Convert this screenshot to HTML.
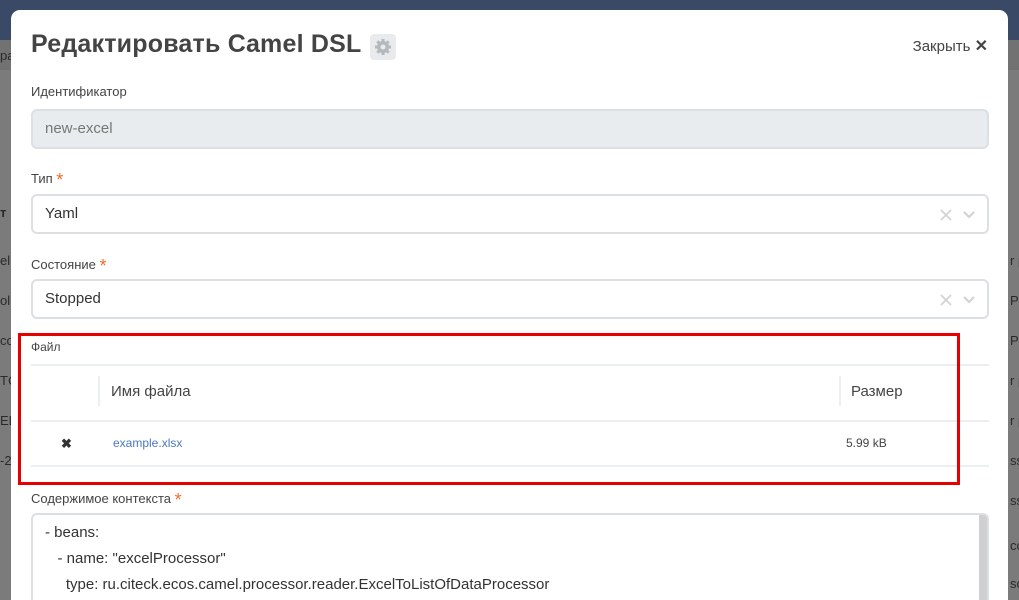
<!DOCTYPE html>
<html><head><meta charset="utf-8"><style>
*{box-sizing:border-box;margin:0;padding:0}
html,body{width:1019px;height:600px;overflow:hidden}
body{position:relative;background:#7b7b7b;font-family:"Liberation Sans","Noto Sans CJK JP",sans-serif;color:#444}
.nav{position:absolute;left:0;top:0;width:1019px;height:40px;background:#3a4a66}
.strip{position:absolute;top:40px;left:0;width:1019px;height:30px;background:#727272}
.bg{position:absolute;font-size:13px;color:#2a2a2a;white-space:nowrap}
.modal{position:absolute;left:11px;top:10px;width:997px;height:590px;background:#fff;border-radius:9px 9px 0 0;overflow:hidden}
h1{position:absolute;left:20px;top:20px;font-size:25px;letter-spacing:0.2px;font-weight:bold;color:#444;white-space:nowrap}
.gear{position:absolute;left:359px;top:24px;width:26px;height:26px;background:#e8eaed;border-radius:4px}
.close{position:absolute;right:20px;top:26px;font-size:15px;color:#444}
.lbl{position:absolute;left:20px;font-size:13px;color:#444}
.star{color:#f5692c;font-size:18px;position:relative;top:3px}
.inp{position:absolute;left:20px;width:958px;height:40px;border:2px solid #dcdfe3;border-radius:6px;font-size:15px;padding:9px 12px;color:#333}
.ic{position:absolute;left:907px;top:13px}
.red{position:absolute;left:7px;top:323px;width:942px;height:152px;border:3px solid #e60000}
.hl{position:absolute;height:2px;background:#eceff2}
.code{position:absolute;left:20px;top:503px;width:958px;height:87px;border:2px solid #dcdfe3;border-bottom:none;border-radius:6px 6px 0 0;font-size:15px;color:#333;line-height:26px;padding:5px 12px;overflow:hidden}
.sb{position:absolute;right:0;top:0;width:8px;height:100%;background:#cfcfcf}
</style></head><body>
<div class="nav"></div>
<div class="strip"></div>
<div class="bg" style="left:0;top:48px">pa</div>
<div class="bg" style="left:0;top:205px;font-weight:bold">т</div>
<div class="bg" style="left:0;top:253px">el</div>
<div class="bg" style="left:0;top:293px">olu</div>
<div class="bg" style="left:0;top:333px">co</div>
<div class="bg" style="left:0;top:373px">TC</div>
<div class="bg" style="left:0;top:413px">EL</div>
<div class="bg" style="left:0;top:453px">-2</div>
<div class="bg" style="left:1010px;top:253px">r p</div>
<div class="bg" style="left:1010px;top:293px">Pr</div>
<div class="bg" style="left:1010px;top:333px">Pr</div>
<div class="bg" style="left:1010px;top:373px">r p</div>
<div class="bg" style="left:1010px;top:413px">r p</div>
<div class="bg" style="left:1010px;top:453px">ss</div>
<div class="bg" style="left:1010px;top:493px">ss</div>
<div class="bg" style="left:1010px;top:538px">co</div>
<div class="bg" style="left:1010px;top:576px">so</div>
<div class="modal">
<h1>Редактировать Camel DSL</h1>
<div class="gear"><svg width="26" height="26" viewBox="0 0 26 26"><g fill="#b5b8bc"><circle cx="13" cy="13" r="6"/><rect x="11.5" y="5" width="3" height="16"/><rect x="5" y="11.5" width="16" height="3"/><rect x="11.5" y="5" width="3" height="16" transform="rotate(45 13 13)"/><rect x="11.5" y="5" width="3" height="16" transform="rotate(-45 13 13)"/></g><circle cx="13" cy="13" r="2.5" fill="#e8eaed"/></svg></div>
<div class="close">Закрыть <b style="font-size:16px">✕</b></div>
<div class="lbl" style="top:74px">Идентификатор</div>
<div class="inp" style="top:99px;background:#e8ecee;color:#777">new-excel</div>
<div class="lbl" style="top:157px">Тип <span class="star">*</span></div>
<div class="inp" style="top:184px">Yaml<svg class="ic" width="40" height="12" viewBox="0 0 40 12"><path d="M1 1L11 11M11 1L1 11" stroke="#d3d3d3" stroke-width="1.8"/><path d="M24 3L29 8L34 3" stroke="#d3d3d3" stroke-width="2.2" fill="none"/></svg></div>
<div class="lbl" style="top:243px">Состояние <span class="star">*</span></div>
<div class="inp" style="top:269px">Stopped<svg class="ic" width="40" height="12" viewBox="0 0 40 12"><path d="M1 1L11 11M11 1L1 11" stroke="#d3d3d3" stroke-width="1.8"/><path d="M24 3L29 8L34 3" stroke="#d3d3d3" stroke-width="2.2" fill="none"/></svg></div>
<div class="lbl" style="top:330px;font-size:12px">Файл</div>
<div class="hl" style="left:20px;top:354px;width:958px"></div>
<div style="position:absolute;left:87px;top:366px;width:2px;height:30px;background:#eceff2"></div>
<div style="position:absolute;left:828px;top:366px;width:2px;height:30px;background:#eceff2"></div>
<div style="position:absolute;left:100px;top:373px;font-size:15px;color:#444">Имя файла</div>
<div style="position:absolute;left:840px;top:373px;font-size:15px;color:#444">Размер</div>
<div class="hl" style="left:20px;top:410px;width:958px"></div>
<div style="position:absolute;left:50px;top:426px;font-size:13px;font-weight:bold;color:#333">✖</div>
<div style="position:absolute;left:102px;top:426px;font-size:12px;color:#4a78c2">example.xlsx</div>
<div style="position:absolute;left:835px;top:426px;font-size:12px;color:#444">5.99 kB</div>
<div class="hl" style="left:20px;top:455px;width:958px"></div>
<div class="red"></div>
<div class="lbl" style="top:477px">Содержимое контекста <span class="star">*</span></div>
<div class="code"><div class="sb"></div>- beans:<br>&nbsp;&nbsp;&nbsp;- name: "excelProcessor"<br>&nbsp;&nbsp;&nbsp;&nbsp;&nbsp;type: ru.citeck.ecos.camel.processor.reader.ExcelToListOfDataProcessor</div>
</div>
</body></html>
